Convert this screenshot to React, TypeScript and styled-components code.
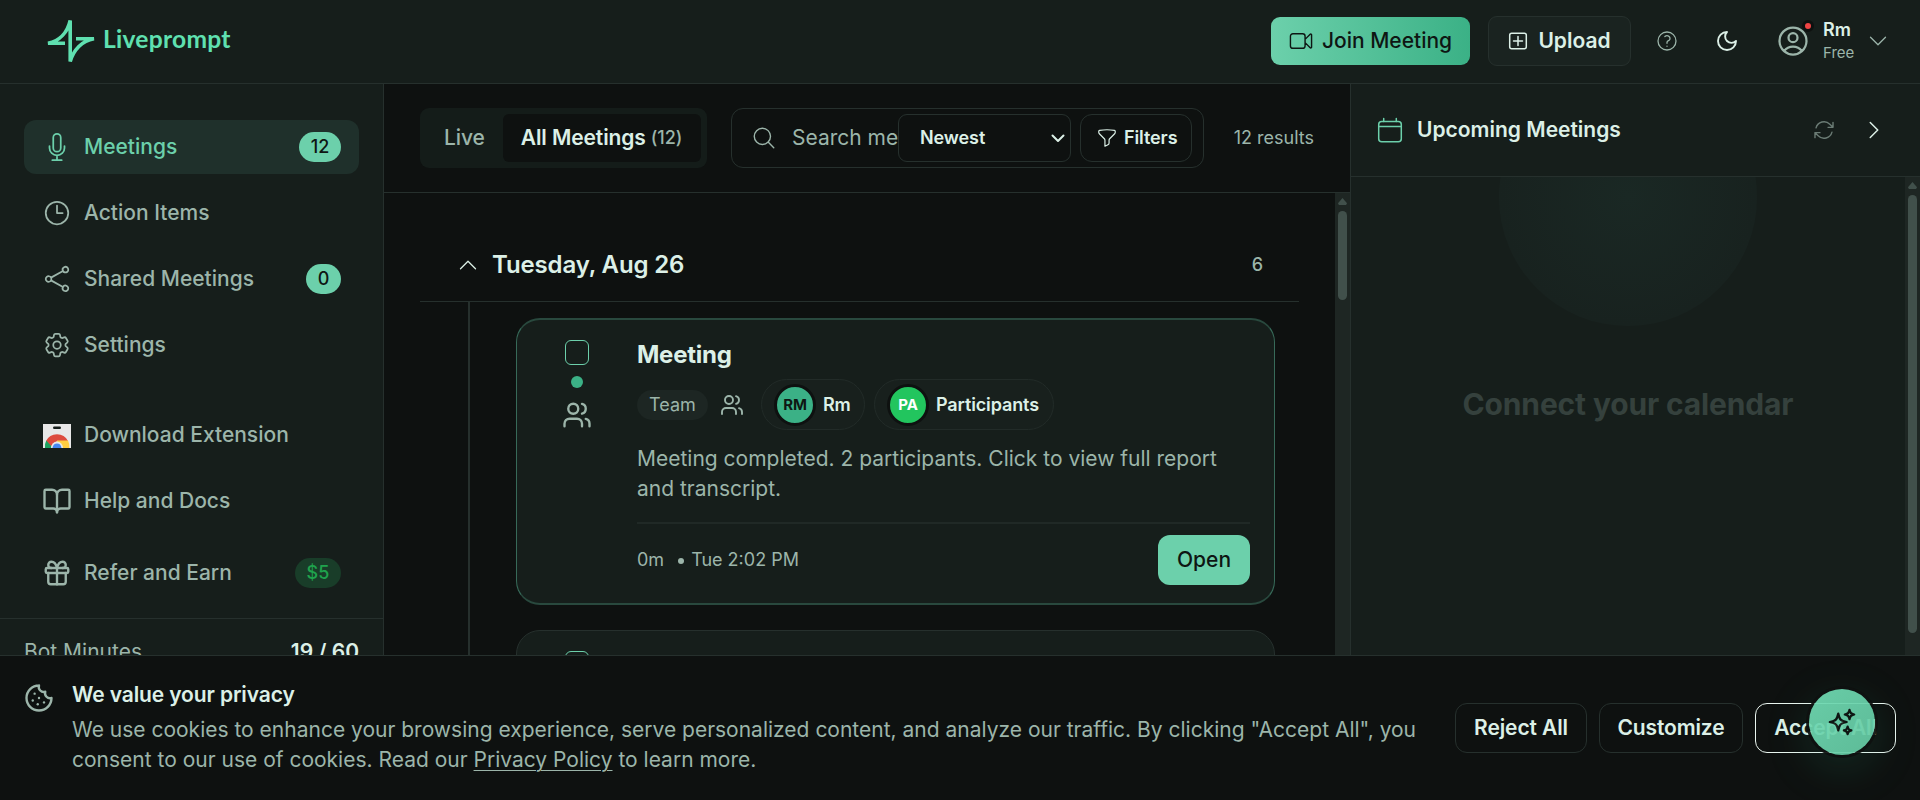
import React from "react";
import styled, { createGlobalStyle, css } from "styled-components";
import {
  HiOutlineMicrophone,
  HiOutlineClock,
  HiOutlineShare,
  HiOutlineCog6Tooth,
  HiOutlineVideoCamera,
  HiOutlineQuestionMarkCircle,
  HiOutlineUserCircle,
  HiOutlineChevronDown,
  HiOutlineChevronUp,
  HiOutlineChevronRight,
  HiOutlineMagnifyingGlass,
  HiOutlineFunnel,
  HiOutlineArrowPath,
  HiOutlineSparkles,
} from "react-icons/hi2";
import { Users, BookOpen, Gift, Cookie } from "lucide-react";

const c = {
  bg: "#0e1110",
  surface: "#161e1b",
  raised: "#1a2320",
  line: "#26302d",
  text: "#dcf0e7",
  muted: "#9cb5aa",
  green: "#6cd0ab",
  greenDark: "#3bb186",
  ink: "#0e1613",
};

const GlobalStyle = createGlobalStyle`
  * { box-sizing: border-box; }
  html, body { margin: 0; background: ${c.bg}; overflow: hidden; }
  body { font-family: Inter, "Liberation Sans", sans-serif; font-size: 21px; line-height: 30px; color: ${c.text}; }
  button { font: inherit; color: inherit; background: none; border: 0; padding: 0; }
  svg { flex: none; display: block; }
`;

const Icon = styled.span<{ $stroke?: number; $color?: string }>`
  display: flex;
  flex: none;
  color: ${(p) => p.$color || "inherit"};
  svg { stroke-width: ${(p) => p.$stroke ?? 1.3}; }
`;

const Page = styled.div`
  position: relative;
  width: 1920px;
  height: 800px;
  overflow: hidden;
  display: flex;
  flex-direction: column;
`;

/* ---------- top bar ---------- */
const TopBar = styled.header`
  height: 84px;
  flex: none;
  display: flex;
  align-items: center;
  padding: 0 30px 1px 47px;
  background: ${c.surface};
  border-bottom: 1px solid ${c.line};
`;
const Brand = styled.div`
  display: flex;
  align-items: center;
  gap: 8px;
  margin-right: auto;
  color: #5fe0b0;
  font: 700 24.6px/30px Lato, sans-serif;
  letter-spacing: 0.25px;
`;
const BrandName = styled.span`
  padding-bottom: 4px;
`;
const JoinButton = styled.button`
  width: 199px;
  height: 48px;
  margin-right: 18px;
  display: flex;
  align-items: center;
  justify-content: center;
  gap: 8px;
  padding-right: 1px;
  border-radius: 9px;
  background: linear-gradient(90deg, ${c.green}, ${c.greenDark});
  color: ${c.ink};
  font-weight: 500;
`;
const UploadButton = styled.button`
  width: 143px;
  height: 50px;
  display: flex;
  align-items: center;
  justify-content: center;
  gap: 10px;
  border: 1px solid ${c.line};
  border-radius: 9px;
  background: ${c.raised};
  font-weight: 600;
`;
const TopIcons = styled.div`
  display: flex;
  gap: 36px;
  margin: 0 36px 0 24px;
`;
const Profile = styled.div`
  display: flex;
  align-items: center;
`;
const Avatar = styled.div`
  position: relative;
  margin-right: 12px;
`;
const RedDot = styled.span`
  position: absolute;
  top: -3px;
  right: -3px;
  width: 12px;
  height: 12px;
  border: 3px solid ${c.bg};
  border-radius: 50%;
  background: #ef4444;
`;
const ProfileText = styled.div`
  width: 43px;
  display: flex;
  flex-direction: column;
  padding-bottom: 1px;
  font: 600 18px/23px Inter;
  span { font: 400 15px/23px Inter; color: ${c.muted}; }
`;

/* ---------- sidebar ---------- */
const Body = styled.div`
  display: flex;
  flex: 1;
  min-height: 0;
`;
const Sidebar = styled.aside`
  width: 384px;
  flex: none;
  background: ${c.surface};
  border-right: 1px solid ${c.line};
`;
const Nav = styled.nav`
  display: flex;
  flex-direction: column;
  gap: 12px;
  padding: 36px 24px 0;
`;
const NavItem = styled.a<{ $active?: boolean }>`
  height: 54px;
  display: flex;
  align-items: center;
  gap: 12px;
  padding: 0 18px;
  border-radius: 12px;
  font-weight: 500;
  color: ${(p) => (p.$active ? c.green : c.muted)};
  background: ${(p) => (p.$active ? "#1f302b" : "transparent")};
`;
const Badge = styled.span<{ $soft?: boolean }>`
  margin-left: auto;
  height: 30px;
  padding: 0 11.7px;
  border-radius: 15px;
  font: 500 18px/29px Inter;
  background: ${(p) => (p.$soft ? "#193d29" : c.green)};
  color: ${(p) => (p.$soft ? "#1fa34d" : c.ink)};
`;
const ReferItem = styled(NavItem)`
  margin-top: 6px;
`;
const Usage = styled.div`
  margin-top: 18px;
  padding: 18px 24px 0;
  display: flex;
  justify-content: space-between;
  border-top: 1px solid ${c.line};
  color: ${c.muted};
  strong { font-weight: 600; color: ${c.text}; }
`;

/* ---------- main column ---------- */
const Main = styled.main`
  width: 967px;
  flex: none;
  display: flex;
  flex-direction: column;
  border-right: 1px solid ${c.line};
`;
const Toolbar = styled.div`
  height: 109px;
  flex: none;
  display: flex;
  align-items: center;
  gap: 24px;
  padding: 0 36px;
  border-bottom: 1px solid ${c.line};
`;
const Tabs = styled.div`
  width: 287px;
  height: 60px;
  display: flex;
  padding: 6px;
  border-radius: 9px;
  background: #141c19;
`;
const Tab = styled.button<{ $active?: boolean }>`
  height: 48px;
  display: flex;
  align-items: center;
  gap: 5px;
  padding: 0 18px;
  border-radius: 6px;
  white-space: nowrap;
  font-weight: ${(p) => (p.$active ? 600 : 500)};
  letter-spacing: -0.1px;
  color: ${(p) => (p.$active ? c.text : c.muted)};
  background: ${(p) => (p.$active ? c.bg : "transparent")};
  flex: ${(p) => (p.$active ? 1 : "none")};
  span { font-size: 18px; font-weight: 500; color: ${c.muted}; }
`;
const SearchBox = styled.div`
  width: 473px;
  height: 60px;
  flex: none;
  display: flex;
  align-items: center;
  padding: 0 11px 0 19px;
  border: 1px solid ${c.line};
  border-radius: 12px;
  > ${Icon} { margin-right: 15px; }
`;
const Placeholder = styled.div`
  width: 106px;
  white-space: nowrap;
  color: ${c.muted};
`;
const SortSelect = styled.button`
  width: 173px;
  height: 48px;
  margin-right: 9px;
  display: flex;
  align-items: center;
  justify-content: space-between;
  padding: 0 4px 0 21px;
  border: 1px solid ${c.line};
  border-radius: 9px;
  font-size: 18px;
  font-weight: 600;
  letter-spacing: -0.1px;
`;
const FilterButton = styled.button`
  width: 112px;
  height: 48px;
  display: flex;
  align-items: center;
  gap: 6px;
  padding-left: 15px;
  border: 1px solid ${c.line};
  border-radius: 12px;
  font-size: 18px;
  font-weight: 600;
  letter-spacing: -0.1px;
`;
const Results = styled.div`
  margin-left: auto;
  white-space: nowrap;
  font-size: 18px;
  color: ${c.muted};
`;
const ScrollArea = styled.div`
  flex: 1;
  min-height: 0;
  display: flex;
`;
const Feed = styled.div`
  flex: 1;
  overflow: hidden;
  padding: 36px 36px 0;
`;
const DayHeader = styled.div`
  height: 73px;
  display: flex;
  align-items: center;
  gap: 12px;
  padding: 0 36px;
  border-bottom: 1px solid ${c.line};
  font-size: 24px;
  font-weight: 600;
  letter-spacing: -0.14px;
  > span:last-child { margin-left: auto; font-size: 18px; font-weight: 500; color: ${c.muted}; }
`;
const Timeline = styled.div`
  margin-left: 48px;
  padding: 16px 24px 0 46px;
  border-left: 2px solid ${c.line};
  display: flex;
  flex-direction: column;
  gap: 25px;
`;
const Card = styled.article<{ $selected?: boolean }>`
  height: 287px;
  flex: none;
  display: flex;
  padding: 20px 24px 18px 34px;
  border: 1px solid ${c.line};
  border-radius: 24px;
  background: ${c.surface};
  ${(p) =>
    p.$selected &&
    css`
      border-color: #376a59;
      border-top: 2px solid #29493e;
      border-bottom: 2px solid #29493e;
    `}
`;
const CardRail = styled.div`
  width: 52px;
  margin-right: 34px;
  display: flex;
  flex-direction: column;
  align-items: center;
`;
const Checkbox = styled.span`
  width: 24px;
  height: 25px;
  margin: 0 0 11px;
  border: 1px solid ${c.green};
  border-radius: 6px;
`;
const StatusDot = styled.span`
  width: 12px;
  height: 12px;
  margin-bottom: 12px;
  border-radius: 50%;
  background: ${c.greenDark};
`;
const CardBody = styled.div`
  flex: 1;
  display: flex;
  flex-direction: column;
`;
const CardTitle = styled.h3`
  margin: 0;
  font: 700 24px/30px Inter;
  letter-spacing: -0.25px;
`;
const Meta = styled.div`
  height: 51px;
  margin-top: 9px;
  display: flex;
  align-items: center;
`;
const Tag = styled.span`
  width: 71px;
  height: 30px;
  margin-right: 12px;
  border-radius: 15px;
  background: #1d2623;
  text-align: center;
  font-size: 18px;
  line-height: 29px;
  color: ${c.muted};
`;
const People = styled.div`
  display: flex;
  gap: 9px;
  margin-left: 17px;
`;
const Chip = styled.span<{ $width: number }>`
  width: ${(p) => p.$width}px;
  height: 51px;
  display: flex;
  align-items: center;
  gap: 7px;
  padding-left: 12px;
  border: 1px solid #222b28;
  border-radius: 26px;
  background: #18201d;
  font-size: 18px;
  font-weight: 600;
  letter-spacing: -0.12px;
`;
const Initials = styled.span<{ $bg: string; $fg: string }>`
  width: 42px;
  height: 42px;
  flex: none;
  border: 3px solid ${c.bg};
  border-radius: 50%;
  background: ${(p) => p.$bg};
  color: ${(p) => p.$fg};
  text-align: center;
  font: 700 15px/35px Inter;
`;
const Summary = styled.p`
  margin: 14px 0 0;
  color: ${c.muted};
`;
const CardFooter = styled.div`
  margin-top: 18px;
  padding-top: 11px;
  display: flex;
  align-items: center;
  border-top: 2px solid #202926;
  font-size: 18px;
  color: ${c.muted};
`;
const Bullet = styled.i`
  width: 6px;
  height: 6px;
  margin: 2px 7px 0 14px;
  border-radius: 50%;
  background: ${c.muted};
`;
const OpenButton = styled.button`
  width: 92px;
  height: 50px;
  margin-left: auto;
  border-radius: 12px;
  background: ${c.green};
  color: ${c.ink};
  font-size: 21px;
  font-weight: 500;
`;

/* ---------- scrollbars ---------- */
const Track = styled.div`
  width: 15px;
  flex: none;
  display: flex;
  flex-direction: column;
  align-items: center;
  padding-top: 5px;
  background: #1e2623;
`;
const Arrow = styled.span`
  width: 9px;
  height: 7px;
  margin-bottom: 6px;
  clip-path: polygon(50% 0, 100% 75%, 90% 100%, 10% 100%, 0 75%);
  background: #41504b;
`;
const Thumb = styled.span<{ $height: number }>`
  width: 9px;
  height: ${(p) => p.$height}px;
  border-radius: 5px;
  background: #41504b;
`;

/* ---------- upcoming panel ---------- */
const Panel = styled.section`
  flex: 1;
  display: flex;
  flex-direction: column;
  background: ${c.surface};
`;
const PanelHeader = styled.div`
  height: 93px;
  flex: none;
  display: flex;
  align-items: center;
  gap: 12px;
  padding: 0 34px 0 24px;
  border-bottom: 1px solid ${c.line};
  font-weight: 600;
`;
const PanelActions = styled.div`
  margin-left: auto;
  display: flex;
  gap: 26px;
`;
const PanelBody = styled.div`
  flex: 1;
  overflow: hidden;
  display: flex;
  flex-direction: column;
  align-items: center;
`;
const Glow = styled.div`
  width: 258px;
  height: 258px;
  flex: none;
  margin-top: -109px;
  border-radius: 50%;
  background: radial-gradient(circle, #1a2824 0%, #18221f 70%, #19211e 100%);
`;
const PanelTitle = styled.h2`
  margin: 57px 0 0;
  font: 700 30px/42px Inter;
  letter-spacing: -0.15px;
  color: #35413d;
`;

/* ---------- cookie banner ---------- */
const Banner = styled.div`
  position: absolute;
  left: 0;
  right: 0;
  bottom: 0;
  height: 145px;
  display: flex;
  padding: 24px;
  border-top: 1px solid ${c.line};
  background: ${c.bg};
`;
const BannerText = styled.div`
  flex: 1;
  margin: 0 24px 0 18px;
  color: ${c.muted};
  h4 { margin: 0 0 5px; font: 600 21px/30px Inter; letter-spacing: -0.12px; color: ${c.text}; }
  p { margin: 0; }
  u { text-underline-offset: 3px; text-decoration-thickness: 1px; }
`;
const BannerButton = styled.button<{ $width: number; $strong?: boolean }>`
  width: ${(p) => p.$width}px;
  height: 50px;
  margin: 23px 0 0 12px;
  border: 1px solid ${(p) => (p.$strong ? "#e9f5ef" : c.line)};
  border-radius: 12px;
  white-space: nowrap;
  font-weight: 600;
  letter-spacing: -0.12px;
`;
const AssistantButton = styled.button`
  position: absolute;
  right: 45px;
  bottom: 45px;
  width: 66px;
  height: 66px;
  display: flex;
  align-items: center;
  justify-content: center;
  border-radius: 50%;
  background: linear-gradient(135deg, #70dbb4, #64c9a2);
  color: ${c.ink};
  opacity: 0.93;
  box-shadow: 0 0 0 3px ${c.bg}, 0 12px 48px rgba(59, 177, 134, 0.2);
`;

const Logo = () => (
  <svg width="48" height="42" viewBox="0 0 48 42" fill="none" stroke="currentColor" strokeLinejoin="miter">
    <path d="M18 23.300H1C13 21 20.500 12 23.200 0.500V41.500C26.500 30 35 20.500 47 18.700H29" />
  </svg>
);
const WebStore = () => (
  <svg width="30" height="30" viewBox="0 0 30 30">
    <path fill="#e8e8e8" d="M1 4h28v24H1z" />
    <rect x="11" y="6.500" width="8" height="2.500" rx="1.200" fill="#161e1b" />
    <path fill="#dd4b3e" d="M4 21a12.300 12.300 0 0 1 22 0H15l-5 7z" />
    <path fill="#1da15f" d="M4.300 20.500A12 12 0 0 0 3 28h8z" />
    <path fill="#ffce42" d="M26 20.500H15V28h12.300a13 13 0 0 0-1.300-7.500z" />
    <path fill="#e8e8e8" d="M9 28a6 6.500 0 0 1 12 0z" />
    <path fill="#4688f1" d="M10.500 28a4.600 5.600 0 0 1 9 0z" />
  </svg>
);
const PlusBox = () => (
  <svg width="20" height="20" viewBox="0 0 20 20" fill="none" stroke="currentColor" strokeLinecap="round">
    <rect x="1.700" y="2.200" width="16.600" height="15.600" rx="2" />
    <path d="M10 5.500v9M5.500 10h9" />
  </svg>
);
const Moon = () => (
  <svg width="24" height="24" viewBox="0 0 24 24" fill="none" stroke="currentColor" strokeLinecap="round" strokeLinejoin="round">
    <path d="M12 3a6 6 0 0 0 9 9 9 9 0 1 1-9-9Z" />
  </svg>
);
const Calendar = () => (
  <svg width="30" height="30" viewBox="0 0 30 30" fill="none" stroke="currentColor" strokeLinecap="round">
    <rect x="3.700" y="6.500" width="22.600" height="20.300" rx="3" />
    <path d="M3.700 11.500h22.600M8.700 3.500v3M21.300 3.500v3" />
  </svg>
);
const Caret = () => (
  <svg width="16" height="16" viewBox="0 0 16 16" fill="none" stroke="currentColor" strokeLinecap="round" strokeLinejoin="round">
    <path d="M2.500 5.500 8 11l5.500-5.500" />
  </svg>
);

const primaryNav = [
  { label: "Meetings", icon: <HiOutlineMicrophone size={30} />, badge: "12", active: true },
  { label: "Action Items", icon: <HiOutlineClock size={30} /> },
  { label: "Shared Meetings", icon: <HiOutlineShare size={30} />, badge: "0" },
  { label: "Settings", icon: <HiOutlineCog6Tooth size={30} /> },
];

export default function App() {
  return (
    <Page>
      <GlobalStyle />
      <TopBar>
        <Brand>
          <Icon $stroke={3.6}><Logo /></Icon>
          <BrandName>Liveprompt</BrandName>
        </Brand>
        <JoinButton>
          <Icon><HiOutlineVideoCamera size={26} /></Icon>
          Join Meeting
        </JoinButton>
        <UploadButton>
          <Icon $stroke={1.5}><PlusBox /></Icon>
          Upload
        </UploadButton>
        <TopIcons>
          <Icon $color={c.muted}><HiOutlineQuestionMarkCircle size={24} /></Icon>
          <Icon $stroke={1.9}><Moon /></Icon>
        </TopIcons>
        <Profile>
          <Avatar>
            <Icon $stroke={1.5} $color={c.muted}><HiOutlineUserCircle size={36} /></Icon>
            <RedDot />
          </Avatar>
          <ProfileText>
            Rm
            <span>Free</span>
          </ProfileText>
          <Icon $color={c.muted}><HiOutlineChevronDown size={24} /></Icon>
        </Profile>
      </TopBar>

      <Body>
        <Sidebar>
          <Nav>
            {primaryNav.map((n) => (
              <NavItem key={n.label} $active={n.active}>
                <Icon $stroke={1.4}>{n.icon}</Icon>
                {n.label}
                {n.badge && <Badge>{n.badge}</Badge>}
              </NavItem>
            ))}
          </Nav>
          <Nav>
            <NavItem>
              <WebStore />
              Download Extension
            </NavItem>
            <NavItem>
              <Icon $stroke={1.9}><BookOpen size={30} /></Icon>
              Help and Docs
            </NavItem>
            <ReferItem>
              <Icon $stroke={1.9}><Gift size={30} /></Icon>
              Refer and Earn
              <Badge $soft>$5</Badge>
            </ReferItem>
          </Nav>
          <Usage>
            Bot Minutes
            <strong>19 / 60</strong>
          </Usage>
        </Sidebar>

        <Main>
          <Toolbar>
            <Tabs>
              <Tab>Live</Tab>
              <Tab $active>
                All Meetings <span>(12)</span>
              </Tab>
            </Tabs>
            <SearchBox>
              <Icon $color={c.muted}><HiOutlineMagnifyingGlass size={26} /></Icon>
              <Placeholder>Search me</Placeholder>
              <SortSelect>
                Newest
                <Icon $stroke={2}><Caret /></Icon>
              </SortSelect>
              <FilterButton>
                <Icon><HiOutlineFunnel size={22} /></Icon>
                Filters
              </FilterButton>
            </SearchBox>
            <Results>12 results</Results>
          </Toolbar>
          <ScrollArea>
            <Feed>
              <DayHeader>
                <Icon><HiOutlineChevronUp size={24} /></Icon>
                Tuesday, Aug 26
                <span>6</span>
              </DayHeader>
              <Timeline>
                <Card $selected>
                  <CardRail>
                    <Checkbox />
                    <StatusDot />
                    <Icon $stroke={1.9} $color={c.muted}><Users size={30} /></Icon>
                  </CardRail>
                  <CardBody>
                    <CardTitle>Meeting</CardTitle>
                    <Meta>
                      <Tag>Team</Tag>
                      <Icon $stroke={1.9} $color={c.muted}><Users size={24} /></Icon>
                      <People>
                        <Chip $width={104}>
                          <Initials $bg={c.greenDark} $fg={c.ink}>RM</Initials>
                          Rm
                        </Chip>
                        <Chip $width={180}>
                          <Initials $bg="#22c55e" $fg="#ffffff">PA</Initials>
                          Participants
                        </Chip>
                      </People>
                    </Meta>
                    <Summary>
                      Meeting completed. 2 participants. Click to view full report and transcript.
                    </Summary>
                    <CardFooter>
                      0m
                      <Bullet />
                      Tue 2:02 PM
                      <OpenButton>Open</OpenButton>
                    </CardFooter>
                  </CardBody>
                </Card>
                <Card>
                  <CardRail>
                    <Checkbox />
                  </CardRail>
                </Card>
              </Timeline>
            </Feed>
            <Track>
              <Arrow />
              <Thumb $height={89} />
            </Track>
          </ScrollArea>
        </Main>

        <Panel>
          <PanelHeader>
            <Icon $stroke={1.5} $color={c.green}><Calendar /></Icon>
            Upcoming Meetings
            <PanelActions>
              <Icon $stroke={1.4} $color="#6b7c75"><HiOutlineArrowPath size={24} /></Icon>
              <Icon $stroke={1.5}><HiOutlineChevronRight size={24} /></Icon>
            </PanelActions>
          </PanelHeader>
          <ScrollArea>
            <PanelBody>
              <Glow />
              <PanelTitle>Connect your calendar</PanelTitle>
            </PanelBody>
            <Track>
              <Arrow />
              <Thumb $height={438} />
            </Track>
          </ScrollArea>
        </Panel>
      </Body>

      <Banner>
        <Icon $stroke={1.9} $color={c.muted}>
          <Cookie size={30} style={{ marginTop: 3 }} />
        </Icon>
        <BannerText>
          <h4>We value your privacy</h4>
          <p>
            We use cookies to enhance your browsing experience, serve personalized content, and analyze our traffic. By
            clicking "Accept All", you consent to our use of cookies. Read our <u>Privacy Policy</u> to learn more.
          </p>
        </BannerText>
        <BannerButton $width={132}>Reject All</BannerButton>
        <BannerButton $width={144}>Customize</BannerButton>
        <BannerButton $width={141} $strong>Accept All</BannerButton>
      </Banner>
      <AssistantButton>
        <Icon $stroke={1.8}><HiOutlineSparkles size={30} /></Icon>
      </AssistantButton>
    </Page>
  );
}
